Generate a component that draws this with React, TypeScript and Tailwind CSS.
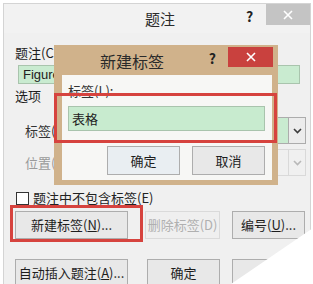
function Chevron({ color = "#3c3c3c" }: { color?: string }) {
  return (
    <svg width="9" height="6" viewBox="0 0 9 6">
      <path d="M1 1 L4.5 4.5 L8 1" fill="none" stroke={color} strokeWidth="1.6" />
    </svg>
  );
}

function CloseX() {
  return (
    <svg width="10" height="10" viewBox="0 0 10 10">
      <path d="M1 1 L9 9 M9 1 L1 9" stroke="#ffffff" strokeWidth="1.6" />
    </svg>
  );
}

function Btn({ children, className = "" }: { children: React.ReactNode; className?: string }) {
  return (
    <div
      className={
        "flex h-[28px] items-center justify-center border border-[#adadad] bg-[#e8e8e8] text-[13px] leading-[16px] " +
        className
      }
    >
      {children}
    </div>
  );
}

export default function App() {
  return (
    <div className="relative h-[284px] w-[313px] overflow-hidden bg-white font-['Noto_Sans_CJK_SC',sans-serif] text-[13px] text-[#1e1e1e]">
      {/* outer dialog */}
      <div className="ml-[3px] mt-[3px] h-[300px] w-[308px] border border-[#d4d4d4] bg-[#f0f0f0]">
        <div className="flex h-[29px] items-start bg-[#f2f2f2]">
          <div className="flex-1 pl-[70px] pt-[5px] text-center text-[15px] leading-[20px] text-[#2a2a2a]">题注</div>
          <div className="w-[20px] pt-[3px] text-[14px] font-bold leading-[18px] text-[#222]">?</div>
          <div className="flex h-[21px] w-[44px] items-center justify-center bg-[#c4c4c4]">
            <CloseX />
          </div>
        </div>

        <div className="pl-[11px] pr-[4px]">
          <div className="mt-[11px] leading-[18px]">题注(C)</div>
          <div className="mt-[3px] ml-[3px] flex h-[19px] w-[282px] items-center border border-[#a9c4ad] bg-[#c9ebd0] pl-[4px] text-[13px] leading-[16px] text-[#222] font-['Liberation_Sans',sans-serif]">
            Figure
          </div>
          <div className="mt-[3px] leading-[18px]">选项</div>

          <div className="mt-[12px] flex h-[27px] items-center">
            <div className="w-[10px]" />
            <div className="leading-[18px] text-[#333]">标签(L):</div>
            <div className="ml-auto flex h-[27px] w-[215px] border border-[#acacac] bg-[#c9ebd0]">
              <div className="flex-1" />
              <div className="flex w-[17px] items-center justify-center border-l border-[#acacac] bg-[#ececec]">
                <Chevron />
              </div>
            </div>
          </div>

          <div className="mt-[5px] flex h-[27px] items-center">
            <div className="w-[10px]" />
            <div className="leading-[18px] text-[#9a9a9a]">位置(P):</div>
            <div className="ml-auto flex h-[27px] w-[215px] border border-[#d9d9d9] bg-[#f0f0f0]">
              <div className="flex-1" />
              <div className="flex w-[17px] items-center justify-center border-l border-[#d9d9d9]">
                <Chevron color="#b8b8b8" />
              </div>
            </div>
          </div>

          <div className="mt-[14px] flex h-[16px] items-center gap-[4px]">
            <div className="ml-[1px] h-[13px] w-[13px] border border-[#333] bg-white" />
            <div className="leading-[16px] text-[#222]">题注中不包含标签(E)</div>
          </div>

          <div className="mt-[5px] flex">
            <Btn className="w-[113px] border-[#86b3dc]">
              新建标签(<span className="underline">N</span>)...
            </Btn>
            <Btn className="ml-[17px] w-[75px] border-[#dadada] bg-[#efefef] text-[#b0b0b0]">删除标签(D)</Btn>
            <Btn className="ml-[12px] w-[73px]">
              编号(<span className="underline">U</span>)...
            </Btn>
          </div>

          <div className="mt-[20px] flex">
            <Btn className="w-[113px]">
              自动插入题注(<span className="underline">A</span>)...
            </Btn>
            <Btn className="ml-[19px] w-[73px]">确定</Btn>
            <Btn className="ml-[12px] w-[73px]">取消</Btn>
          </div>
        </div>
      </div>

      {/* new label dialog */}
      <div className="absolute left-[54px] top-[45px] flex h-[140px] w-[224px] flex-col bg-[#d0b28b]">
        <div className="flex h-[30px] items-start">
          <div className="pl-[46px] pt-[6px] text-[16px] leading-[20px] text-[#2a2a2a]">新建标签</div>
          <div className="ml-auto pt-[4px] text-[14px] font-bold leading-[18px] text-[#222]">?</div>
          <div className="ml-[12px] mr-[5px] mt-[2px] flex h-[20px] w-[45px] items-center justify-center bg-[#c9413e]">
            <CloseX />
          </div>
        </div>
        <div className="mb-[5px] ml-[8px] mr-[6px] flex-1 bg-[#f7f7f5] px-[6px] pt-[8px]">
          <div className="leading-[16px] text-[#333]">标签(L):</div>
          <div className="mt-[7px] flex h-[25px] w-[197px] items-center border border-[#a9c4ad] bg-[#c8ebcf] pl-[3px] leading-[16px] text-[#222]">
            表格
          </div>
          <div className="mt-[15px] flex justify-end gap-[12px] pr-[1px]">
            <Btn className="h-[29px] w-[73px] border-[#5fa3e0] bg-[#e9eef2]">确定</Btn>
            <Btn className="h-[29px] w-[73px]">取消</Btn>
          </div>
        </div>
      </div>

      {/* highlight boxes */}
      <div className="absolute left-[54px] top-[93px] h-[50px] w-[223px] border-[3px] border-[#d6433e]" />
      <div className="absolute left-[10px] top-[205px] h-[37px] w-[133px] border-[3px] border-[#d6433e]" />

      {/* page curl */}
      <svg className="absolute left-0 top-0" width="313" height="284" viewBox="0 0 313 284">
        <polygon points="313,228 313,284 231,284" fill="#ffffff" />
      </svg>
    </div>
  );
}
